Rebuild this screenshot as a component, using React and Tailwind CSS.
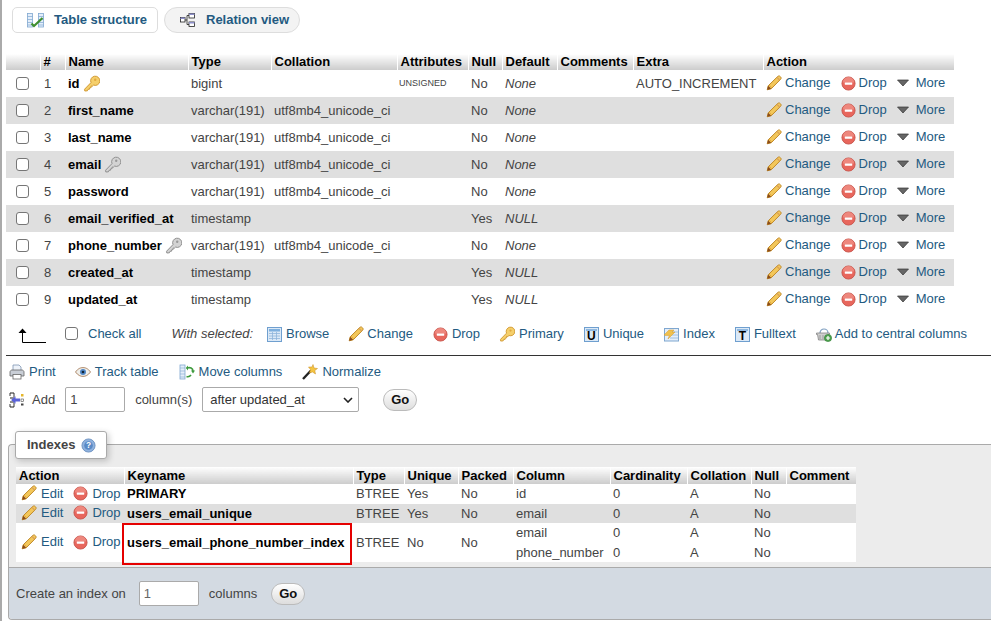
import React from "react";

const F = { fontFamily: '"Liberation Sans", Arial, sans-serif' };

function Pencil({ className = "" }) {
  return (
    <svg viewBox="0 0 16 16" width="16" height="16" className={`shrink-0 ${className}`}>
      <path d="M1.2 14.8 2.2 10.8 11.8 1.4c.8-.7 1.8-.6 2.4.1l.4.4c.7.7.7 1.6 0 2.4L5.2 13.8Z" fill="#f3c75a" stroke="#c08a2a" strokeWidth="1" />
      <path d="M3.2 10.2 5.8 12.8" stroke="#e6a93a" strokeWidth="1" />
      <path d="M1.2 14.8 2.2 10.8 5.2 13.8Z" fill="#8a4b1c" />
      <path d="M11 2.4 13.6 5" stroke="#d9a05a" strokeWidth="1.2" />
    </svg>
  );
}
function DropIcon() {
  return (
    <svg viewBox="0 0 16 16" width="15" height="15" className="shrink-0">
      <circle cx="8" cy="8" r="7" fill="#e8665c" stroke="#c9574f" strokeWidth="1" />
      <path d="M2 7a6 6 0 0 1 12 0Z" fill="#f1958c" opacity=".7" />
      <rect x="4" y="6.8" width="8" height="2.4" rx=".4" fill="#fff" />
    </svg>
  );
}
function Tri() {
  return (
    <svg viewBox="0 0 12 8" width="12" height="8" className="shrink-0">
      <path d="M0.5 1h11L6 7Z" fill="#666" stroke="#333" strokeWidth=".7" />
    </svg>
  );
}
function KeyGold({ gray = false, size = 17 }) {
  const f = gray ? "#d3d3d3" : "#f5cf6b";
  const s = gray ? "#8f8f8f" : "#d29a33";
  return (
    <svg viewBox="0 0 17 17" width={size} height={size} className="shrink-0">
      <path d="M1.6 14.2 8 7.6a4.6 4.6 0 1 1 2.6 2.5l-1.2 1.1-1.4-.1.1 1.5-1.4.2-.2 1.4-1.5.1-.6 1.5-2.6.2Z" fill={f} stroke={s} strokeWidth="1" strokeLinejoin="round" />
      <circle cx="12.2" cy="4.8" r="1.2" fill={gray ? "#999" : "#e2a93e"} />
    </svg>
  );
}
function Browse() {
  return (
    <svg viewBox="0 0 15 15" width="15" height="15" className="shrink-0">
      <rect x=".5" y=".5" width="14" height="14" fill="#dbe9f7" stroke="#6f9fcf" />
      <rect x="2" y="2" width="11" height="2.5" fill="#7fb0de" />
      <path d="M2 6.5h11M2 9h11M2 11.5h11M5.5 5v8M9.5 5v8" stroke="#8fb5da" strokeWidth=".8" />
    </svg>
  );
}
function BoxLetter({ l }) {
  return (
    <span className="relative w-[15px] h-[15px] shrink-0 block">
      <svg viewBox="0 0 15 15" width="15" height="15" className="absolute inset-0">
        <rect x=".5" y=".5" width="14" height="14" fill="#dbe9f7" stroke="#6f9fcf" />
        <rect x="2" y="2" width="11" height="2" fill="#8fb8e0" />
      </svg>
      <span className="absolute left-0 right-0 top-[3px] text-center text-[12px] leading-[12px] font-bold text-black">{l}</span>
    </span>
  );
}
function IndexIcon() {
  return (
    <svg viewBox="0 0 15 15" width="15" height="15" className="shrink-0">
      <rect x=".5" y="1.5" width="14" height="12.5" fill="#e4eefa" stroke="#7fa7d0" />
      <path d="M6 5h8M6 8h8M6 11h8" stroke="#8fb5da" strokeWidth=".8" />
      <path d="M0 8 5 3h5L8 5h3L4 12l1.4-3.6H1Z" fill="#f0c14e" stroke="#d49a2e" strokeWidth=".5" />
    </svg>
  );
}
function Basket() {
  return (
    <svg viewBox="0 0 16 16" width="16" height="16" className="shrink-0">
      <path d="M4 7a4 4 0 0 1 8 0" fill="none" stroke="#7f9fc0" strokeWidth="1.2" />
      <path d="M.5 7h13v1.5h-1l-1 5.5h-9l-1-5.5h-1Z" fill="#cfcfcf" stroke="#777" strokeWidth=".7" />
      <path d="M4 9v4M7 9v4M10 9v4" stroke="#888" strokeWidth=".7" />
      <circle cx="12" cy="12" r="3.6" fill="#4ea24e" stroke="#2e7d32" strokeWidth=".6" />
      <path d="M10 12h4M12 10v4" stroke="#fff" strokeWidth="1.2" />
    </svg>
  );
}
function Printer() {
  return (
    <svg viewBox="0 0 16 16" width="16" height="16" className="shrink-0">
      <path d="M4 1h6l2 2v4H4Z" fill="#eef3fa" stroke="#7f96b2" strokeWidth=".8" />
      <path d="M1 8c0-1 1-2 2-2h10c1 0 2 1 2 2v4H1Z" fill="#c9ced6" stroke="#666" strokeWidth=".8" />
      <rect x="4" y="10.5" width="8" height="4.5" fill="#fff" stroke="#666" strokeWidth=".8" />
    </svg>
  );
}
function Eye() {
  return (
    <svg viewBox="0 0 16 16" width="16" height="16" className="shrink-0">
      <path d="M.5 8C3 4.5 5.5 3.6 8 3.6s5 .9 7.5 4.4c-2.5 3.4-5 4.4-7.5 4.4S3 11.400.5 8Z" fill="#eeeeea" stroke="#b08a6a" strokeWidth="1" />
      <circle cx="8" cy="8" r="3" fill="#4f86c6" />
      <circle cx="8" cy="8" r="1.3" fill="#123" />
    </svg>
  );
}
function MoveCols() {
  return (
    <svg viewBox="0 0 16 16" width="16" height="16" className="shrink-0">
      <rect x="1" y="1" width="5" height="14" fill="#e4eefa" stroke="#7fa7d0" strokeWidth=".8" />
      <path d="M1 4h5M1 7h5M1 10h5M1 13h5" stroke="#7fa7d0" strokeWidth=".6" />
      <path d="M8 4c3-1 6 0 6 3" fill="none" stroke="#3d9a3d" strokeWidth="1.6" />
      <path d="M12 11c-1.500 2-3 2-4.500 1.500" fill="none" stroke="#3d9a3d" strokeWidth="1.600" />
      <path d="M9 1.500 6.800 4 9 6.500ZM12 6.500h4l-2 3Z" fill="#3d9a3d" />
    </svg>
  );
}
function Wand() {
  return (
    <svg viewBox="0 0 16 16" width="16" height="16" className="shrink-0">
      <path d="M1 15 9 6.500" stroke="#222" strokeWidth="2.400" />
      <path d="M11 0.500 12 4l3.500.5-2.700 2 .7 3.500L10.500 8 7.500 9l1-3.500L6.500 3 10 3Z" fill="#f4c542" stroke="#c98a1e" strokeWidth=".5" />
    </svg>
  );
}
function AddCol() {
  return (
    <svg viewBox="0 0 16 16" width="16" height="16" className="shrink-0">
      <path d="M1 1h4M1 15h4M1 6h4M1 10h4" stroke="#222" strokeWidth="1.100" />
      <path d="M5 1v4M5 11v4M1 1v3M1 12v3" stroke="#222" strokeWidth=".9" />
      <path d="M2 8 6.500 4.200v2.300H11v3H6.500v2.300Z" fill="#5a62d8" />
      <rect x="12" y="2" width="2.500" height="2.500" fill="#e5b62a" />
      <rect x="12" y="7" width="2.500" height="2.500" fill="#fff" stroke="#444" strokeWidth=".6" />
      <rect x="12" y="11.500" width="2.500" height="2" fill="#444" />
    </svg>
  );
}
function Help() {
  return (
    <svg viewBox="0 0 16 16" width="15" height="15" className="shrink-0">
      <circle cx="8" cy="8" r="7" fill="#8fb2de" stroke="#6f93c2" />
      <circle cx="8" cy="8" r="4.600" fill="#5a8ac6" />
      <text x="8" y="11" textAnchor="middle" fontSize="9" fontWeight="700" fill="#fff" fontFamily="Liberation Sans">?</text>
    </svg>
  );
}
function TableStructIcon() {
  return (
    <svg viewBox="0 0 17 15" width="17" height="15" className="shrink-0">
      <rect x=".5" y=".5" width="5" height="13.500" fill="#e4eefa" stroke="#7fa7d0" strokeWidth=".8" />
      <path d="M.5 3.500h5M.5 6.500h5M.5 9.500h5M.5 12h5" stroke="#7fa7d0" strokeWidth=".7" />
      <rect x="11.500" y=".5" width="5" height="13.500" fill="#e4eefa" stroke="#7fa7d0" strokeWidth=".8" />
      <path d="M11.500 3.500h5M11.500 6.500h5M11.500 9.500h5M11.500 12h5" stroke="#7fa7d0" strokeWidth=".7" />
      <path d="M4.500 10.500 7 13 15.500 5" fill="none" stroke="#3f8f2f" strokeWidth="2.200" />
    </svg>
  );
}
function RelationIcon() {
  return (
    <svg viewBox="0 0 15 14" width="15" height="14" className="shrink-0">
      <path d="M4 7h3M7 2.500v9M7 2.500h2M7 11.500h2" fill="none" stroke="#222" strokeWidth=".8" />
      <rect x="9" y=".5" width="5.500" height="4.500" fill="#fff" stroke="#222" strokeWidth=".8" />
      <rect x="9" y=".5" width="5.500" height="1.500" fill="#8d8fc9" />
      <rect x="9" y="9" width="5.500" height="4.500" fill="#fff" stroke="#222" strokeWidth=".8" />
      <rect x="9" y="9" width="5.500" height="1.500" fill="#8d8fc9" />
      <rect x=".5" y="4.500" width="4.500" height="4.500" fill="#fff" stroke="#222" strokeWidth=".8" />
      <rect x=".5" y="4.500" width="4.500" height="1.500" fill="#8d8fc9" />
    </svg>
  );
}

const rows = [
  ["1", "id", "gold", "bigint", "", "UNSIGNED", "No", "None", "AUTO_INCREMENT"],
  ["2", "first_name", null, "varchar(191)", "utf8mb4_unicode_ci", "", "No", "None", ""],
  ["3", "last_name", null, "varchar(191)", "utf8mb4_unicode_ci", "", "No", "None", ""],
  ["4", "email", "gray", "varchar(191)", "utf8mb4_unicode_ci", "", "No", "None", ""],
  ["5", "password", null, "varchar(191)", "utf8mb4_unicode_ci", "", "No", "None", ""],
  ["6", "email_verified_at", null, "timestamp", "", "", "Yes", "NULL", ""],
  ["7", "phone_number", "gray", "varchar(191)", "utf8mb4_unicode_ci", "", "No", "None", ""],
  ["8", "created_at", null, "timestamp", "", "", "Yes", "NULL", ""],
  ["9", "updated_at", null, "timestamp", "", "", "Yes", "NULL", ""],
];

const heads = [
  ["", "w-[34px]"], ["#", "w-[25px]"], ["Name", "w-[123px]"], ["Type", "w-[83px]"], ["Collation", "w-[126px]"],
  ["Attributes", "w-[71px]"], ["Null", "w-[34px]"], ["Default", "w-[55px]"], ["Comments", "w-[76px]"], ["Extra", "w-[130px]"], ["Action", "w-[191px]"],
];

const thCls = "h-4 p-0 pl-[3px] text-left font-bold text-black text-[13px] leading-4 bg-gradient-to-b from-white to-[#cccccc] border-r border-white last:border-r-0 whitespace-nowrap";
const tdCls = "p-0 pl-[3px] align-middle whitespace-nowrap";

function Check({ className = "" }) {
  return <span className={`block w-[13px] h-[13px] rounded-[3px] border border-[#767676] bg-white shrink-0 ${className}`} />;
}

function StructureTable() {
  return (
    <table className="ml-[6px] mt-[21px] w-[948px] table-fixed border-collapse text-[13px] text-[#444]">
      <colgroup>{heads.map(([h, w], i) => <col key={i} className={w} />)}</colgroup>
      <thead>
        <tr>{heads.map(([h], i) => <th key={i} className={thCls}>{h}</th>)}</tr>
      </thead>
      <tbody>
        {rows.map((r, i) => (
          <tr key={r[0]} className={`h-[27px] ${i % 2 ? "bg-[#dfdfdf]" : "bg-white"}`}>
            <td className="p-0 pl-[10px] align-middle"><Check /></td>
            <td className={tdCls}><span className="pl-[1px]">{r[0]}</span></td>
            <td className={tdCls}>
              <span className="inline-flex items-center gap-[3px] font-bold text-black">
                {r[1]}
                {r[2] && <KeyGold gray={r[2] === "gray"} />}
              </span>
            </td>
            <td className={tdCls}>{r[3]}</td>
            <td className={tdCls}>{r[4]}</td>
            <td className="p-0 pl-[2px] align-middle text-[9px] whitespace-nowrap">{r[5]}</td>
            <td className={tdCls}>{r[6]}</td>
            <td className={`${tdCls} italic`}>{r[7]}</td>
            <td className={tdCls}></td>
            <td className={tdCls}>{r[8]}</td>
            <td className={tdCls}>
              <div className="flex items-center text-[#235a81] -mt-[1px]">
                <Pencil />
                <span className="ml-[3px]">Change</span>
                <span className="ml-[10px]"><DropIcon /></span>
                <span className="ml-[3px]">Drop</span>
                <span className="ml-[10px]"><Tri /></span>
                <span className="ml-[7px]">More</span>
              </div>
            </td>
          </tr>
        ))}
      </tbody>
    </table>
  );
}

function WithItem({ icon, label, className = "" }) {
  return (
    <span className={`flex items-center gap-[3px] text-[#235a81] ${className}`}>
      {icon}
      {label}
    </span>
  );
}

function CheckAllBar() {
  return (
    <div className="ml-[6px] h-[43px] border-b border-[#333] flex items-center text-[13px] text-[#235a81] whitespace-nowrap">
      <svg viewBox="0 0 30 16" width="30" height="16" className="ml-[12px] mt-[2px] shrink-0">
        <path d="M4.500 15.500V4" stroke="#000" strokeWidth="1" />
        <path d="M4.500 15.500H28" stroke="#000" strokeWidth="1" />
        <path d="M.5 6 4.500 1.500 8.500 6Z" fill="#000" />
      </svg>
      <Check className="ml-[17px] -mt-[1px]" />
      <span className="ml-[10px] -mt-[1px]">Check all</span>
      <span className="ml-[30px] -mt-[1px] italic text-[#444]">With selected:</span>
      <WithItem className="ml-[14px]" icon={<Browse />} label={<span className="ml-[1px]">Browse</span>} />
      <WithItem className="ml-[19px]" icon={<Pencil />} label="Change" />
      <WithItem className="ml-[20px]" icon={<DropIcon />} label={<span className="ml-[1px]">Drop</span>} />
      <WithItem className="ml-[19px]" icon={<KeyGold size={16} />} label={<span className="ml-[1px]">Primary</span>} />
      <WithItem className="ml-[20px]" icon={<BoxLetter l="U" />} label={<span className="ml-[1px]">Unique</span>} />
      <WithItem className="ml-[20px]" icon={<IndexIcon />} label={<span className="ml-[1px]">Index</span>} />
      <WithItem className="ml-[20px]" icon={<BoxLetter l="T" />} label={<span className="ml-[1px]">Fulltext</span>} />
      <WithItem className="ml-[20px]" icon={<Basket />} label="Add to central columns" />
    </div>
  );
}

function Btn({ children }) {
  return (
    <span className="flex items-center justify-center w-[34px] h-[22px] rounded-full border border-[#bbb] bg-gradient-to-b from-white to-[#dddddd] text-[13px] font-bold text-[#111]">
      {children}
    </span>
  );
}

function ToolRows() {
  return (
    <div className="text-[13px] whitespace-nowrap">
      <div className="flex items-center h-[15px] mt-[8px] ml-[9px] text-[#235a81]">
        <span className="flex items-center gap-[4px]"><Printer />Print</span>
        <span className="flex items-center gap-[4px] ml-[19px]"><Eye />Track table</span>
        <span className="flex items-center gap-[4px] ml-[20px]"><MoveCols />Move columns</span>
        <span className="flex items-center gap-[4px] ml-[20px]"><Wand />Normalize</span>
      </div>
      <div className="flex items-center mt-[8px] ml-[9px] h-[25px] text-[#444]">
        <AddCol />
        <span className="ml-[7px]">Add</span>
        <span className="ml-[10px] w-[60px] h-[25px] px-[4px] flex items-center bg-white border border-[#aaa] rounded-[2px] text-[#444]">1</span>
        <span className="ml-[10px]">column(s)</span>
        <span className="ml-[10px] w-[157px] h-[25px] pl-[7px] pr-[4px] flex items-center justify-between bg-white border border-[#aaa] rounded-[2px] text-[#333]">
          after updated_at
          <svg viewBox="0 0 10 6" width="10" height="6" className="mr-[1px]"><path d="M1 1l4 4 4-4" fill="none" stroke="#222" strokeWidth="1.600" /></svg>
        </span>
        <span className="ml-[24px]"><Btn>Go</Btn></span>
      </div>
    </div>
  );
}

const idxHeads = [
  ["Action", "w-[108px]"], ["Keyname", "w-[229px]"], ["Type", "w-[51px]"], ["Unique", "w-[54px]"], ["Packed", "w-[55px]"],
  ["Column", "w-[97px]"], ["Cardinality", "w-[77px]"], ["Collation", "w-[64px]"], ["Null", "w-[35px]"], ["Comment", "w-[70px]"],
];

const tc = "p-0 pl-[3px] align-middle whitespace-nowrap";

function IdxAction() {
  return (
    <div className="flex items-center text-[#235a81] pl-[2px] -mt-[1px]">
      <Pencil />
      <span className="ml-[4px]">Edit</span>
      <span className="ml-[10px]"><DropIcon /></span>
      <span className="ml-[4px]">Drop</span>
    </div>
  );
}

function IndexesTable() {
  return (
    <table className="ml-[7px] mt-[22px] w-[840px] table-fixed border-collapse text-[13px] text-[#444]">
      <colgroup>{idxHeads.map(([h, w], i) => <col key={i} className={w} />)}</colgroup>
      <thead>
        <tr>{idxHeads.map(([h], i) => <th key={i} className={`${thCls} h-[17px]`}>{h}</th>)}</tr>
      </thead>
      <tbody>
        <tr className="h-[19px] bg-white">
          <td className={tc}><IdxAction /></td>
          <td className={`${tc} font-bold text-black`}>PRIMARY</td>
          <td className={tc}>BTREE</td><td className={tc}>Yes</td><td className={tc}>No</td><td className={tc}>id</td><td className={tc}>0</td><td className={tc}>A</td><td className={tc}>No</td><td className={tc}></td>
        </tr>
        <tr className="h-[19px] bg-[#dfdfdf]">
          <td className={tc}><IdxAction /></td>
          <td className={`${tc} font-bold text-black`}>users_email_unique</td>
          <td className={tc}>BTREE</td><td className={tc}>Yes</td><td className={tc}>No</td><td className={tc}>email</td><td className={tc}>0</td><td className={tc}>A</td><td className={tc}>No</td><td className={tc}></td>
        </tr>
        <tr className="h-[17px] bg-white">
          <td className={tc} rowSpan={2}><IdxAction /></td>
          <td className={`${tc} font-bold text-black relative`} rowSpan={2}>
            users_email_phone_number_index
            <span className="absolute left-[-2px] right-[1px] top-0 bottom-[-3px] border-2 border-[#e50000]" />
          </td>
          <td className={tc} rowSpan={2}>BTREE</td><td className={tc} rowSpan={2}>No</td><td className={tc} rowSpan={2}>No</td>
          <td className={tc}>email</td><td className={tc}>0</td><td className={tc}>A</td><td className={tc}>No</td><td className={tc} rowSpan={2}></td>
        </tr>
        <tr className="h-[17px] bg-white">
          <td className={tc}>phone_number</td><td className={tc}>0</td><td className={tc}>A</td><td className={tc}>No</td>
        </tr>
      </tbody>
    </table>
  );
}

function IndexesSection() {
  return (
    <div className="ml-[8px] mt-[32px] relative border border-r-0 border-[#aaa] rounded-l-[4px] bg-[#ececec]">
      <div className="absolute left-[6px] top-[-14px] w-[92px] h-[28px] bg-white border border-[#aaa] rounded-[3px] shadow-[2px_2px_6px_rgba(0,0,0,0.2)] flex items-center pl-[11px] gap-[6px] text-[13px] font-bold text-[#444]">
        Indexes <Help />
      </div>
      <IndexesTable />
      <div className="mt-[5px] h-[52px] border-t border-[#aaa] bg-[#d3dae2] rounded-bl-[4px] flex items-center pl-[7px] text-[13px] text-[#444] whitespace-nowrap">
        Create an index on
        <span className="ml-[13px] w-[60px] h-[25px] px-[4px] flex items-center bg-white border border-[#aaa] rounded-[2px] text-[#666]">1</span>
        <span className="ml-[10px]">columns</span>
        <span className="ml-[14px]"><Btn>Go</Btn></span>
      </div>
    </div>
  );
}

export default function App() {
  return (
    <div style={F} className="relative w-[991px] h-[621px] overflow-hidden bg-white border-l-2 border-[#aaaaaa] box-border">
      <div className="-ml-[2px]">
        <div className="flex pt-[7px] pl-[12px] gap-[6px] text-[13px] font-bold text-[#235a81]">
          <div className="flex items-center w-[146px] h-[26px] pl-[14px] gap-[10px] bg-white border border-[#ddd] rounded-[5px]">
            <TableStructIcon />Table structure
          </div>
          <div className="flex items-center w-[136px] h-[26px] pl-[15px] gap-[11px] bg-[#f3f3f3] border border-[#ddd] rounded-full">
            <RelationIcon />Relation view
          </div>
        </div>
        <StructureTable />
        <CheckAllBar />
        <ToolRows />
        <IndexesSection />
      </div>
    </div>
  );
}
